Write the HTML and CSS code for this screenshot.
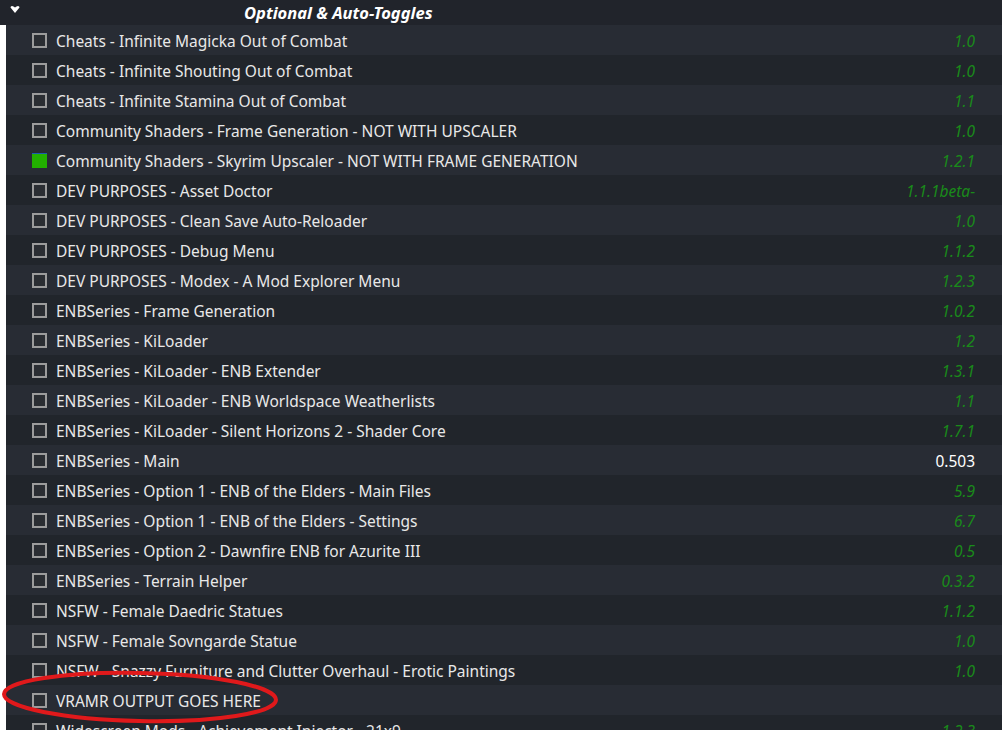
FILE: index.html
```html
<!DOCTYPE html>
<html>
<head>
<meta charset="utf-8">
<link rel="stylesheet" href="styles.css">
</head>
<body>
<div class="tree">
  <div class="header">
    <svg class="caret" width="10" height="8" viewBox="0 0 10 8"><path d="M0.5 1.5 Q0.5 0 2 0 Q3.5 0 5 1.5 Q6.5 0 8 0 Q9.5 0 9.5 1.5 L5 7 Z" fill="#ffffff"/></svg>
    <span class="title">Optional &amp; Auto-Toggles</span>
  </div>
  <div class="rows">
    <div class="row"><span class="cb"></span><span class="name">Cheats - Infinite Magicka Out of Combat</span><span class="ver">1.0</span></div>
    <div class="row"><span class="cb"></span><span class="name">Cheats - Infinite Shouting Out of Combat</span><span class="ver">1.0</span></div>
    <div class="row"><span class="cb"></span><span class="name">Cheats - Infinite Stamina Out of Combat</span><span class="ver">1.1</span></div>
    <div class="row"><span class="cb"></span><span class="name">Community Shaders - Frame Generation - NOT WITH UPSCALER</span><span class="ver">1.0</span></div>
    <div class="row"><span class="cb on"></span><span class="name">Community Shaders - Skyrim Upscaler - NOT WITH FRAME GENERATION</span><span class="ver">1.2.1</span></div>
    <div class="row"><span class="cb"></span><span class="name">DEV PURPOSES - Asset Doctor</span><span class="ver">1.1.1beta-</span></div>
    <div class="row"><span class="cb"></span><span class="name">DEV PURPOSES - Clean Save Auto-Reloader</span><span class="ver">1.0</span></div>
    <div class="row"><span class="cb"></span><span class="name">DEV PURPOSES - Debug Menu</span><span class="ver">1.1.2</span></div>
    <div class="row"><span class="cb"></span><span class="name">DEV PURPOSES - Modex - A Mod Explorer Menu</span><span class="ver">1.2.3</span></div>
    <div class="row"><span class="cb"></span><span class="name">ENBSeries - Frame Generation</span><span class="ver">1.0.2</span></div>
    <div class="row"><span class="cb"></span><span class="name">ENBSeries - KiLoader</span><span class="ver">1.2</span></div>
    <div class="row"><span class="cb"></span><span class="name">ENBSeries - KiLoader - ENB Extender</span><span class="ver">1.3.1</span></div>
    <div class="row"><span class="cb"></span><span class="name">ENBSeries - KiLoader - ENB Worldspace Weatherlists</span><span class="ver">1.1</span></div>
    <div class="row"><span class="cb"></span><span class="name">ENBSeries - KiLoader - Silent Horizons 2 - Shader Core</span><span class="ver">1.7.1</span></div>
    <div class="row"><span class="cb"></span><span class="name">ENBSeries - Main</span><span class="ver plain">0.503</span></div>
    <div class="row"><span class="cb"></span><span class="name">ENBSeries - Option 1 - ENB of the Elders - Main Files</span><span class="ver">5.9</span></div>
    <div class="row"><span class="cb"></span><span class="name">ENBSeries - Option 1 - ENB of the Elders - Settings</span><span class="ver">6.7</span></div>
    <div class="row"><span class="cb"></span><span class="name">ENBSeries - Option 2 - Dawnfire ENB for Azurite III</span><span class="ver">0.5</span></div>
    <div class="row"><span class="cb"></span><span class="name">ENBSeries - Terrain Helper</span><span class="ver">0.3.2</span></div>
    <div class="row"><span class="cb"></span><span class="name">NSFW - Female Daedric Statues</span><span class="ver">1.1.2</span></div>
    <div class="row"><span class="cb"></span><span class="name">NSFW - Female Sovngarde Statue</span><span class="ver">1.0</span></div>
    <div class="row"><span class="cb"></span><span class="name">NSFW - Snazzy Furniture and Clutter Overhaul - Erotic Paintings</span><span class="ver">1.0</span></div>
    <div class="row"><span class="cb"></span><span class="name">VRAMR OUTPUT GOES HERE</span><span class="ver"></span></div>
    <div class="row"><span class="cb"></span><span class="name">Widescreen Mods - Achievement Injector - 21x9</span><span class="ver">1.2.3</span></div>
  </div>
  <svg class="mark" width="290" height="60" viewBox="0 0 290 60"><ellipse cx="139" cy="27" rx="136" ry="24" fill="none" stroke="#e0191b" stroke-width="4" transform="rotate(1.2 139 27)"/></svg>
</div>
</body>
</html>
```
FILE: styles.css
```css
html, body {
  margin: 0;
  padding: 0;
  background: #ffffff;
  overflow: hidden;
}
.tree {
  position: relative;
  width: 1002px;
  height: 730px;
  overflow: hidden;
  font-family: "Noto Sans", "Open Sans", sans-serif;
}
.header {
  height: 25px;
  background: #21242b;
  display: flex;
  align-items: center;
}
.caret {
  margin-left: 10px;
  margin-top: -5px;
}
.title {
  margin-left: 224px;
  color: #ffffff;
  font-weight: bold;
  font-style: italic;
  font-size: 16.5px;
}
.rows {
  margin-left: 6px;
}
.row {
  height: 30px;
  display: flex;
  align-items: center;
  background: #282c34;
  color: #e8e8e8;
  font-size: 15.5px;
  padding-top: 2px;
  box-sizing: border-box;
}
.row:nth-child(even) {
  background: #21252b;
}
.cb {
  width: 11px;
  height: 11px;
  border: 2px solid #9c9c9c;
  background: #2b2e33;
  margin-left: 26px;
  margin-right: 9px;
  margin-top: -2px;
  flex: none;
}
.cb.on {
  width: 15px;
  height: 15px;
  border: none;
  background: #22b000;
  box-shadow: inset 0 1px 0 #1c5bb0;
}
.name {
  flex: 1;
  white-space: nowrap;
}
.ver {
  padding-right: 27px;
  color: #1a8a1a;
  font-style: italic;
}
.ver.plain {
  color: #ffffff;
  font-style: normal;
}
.mark {
  position: absolute;
  left: 1px;
  top: 670px;
}
```
